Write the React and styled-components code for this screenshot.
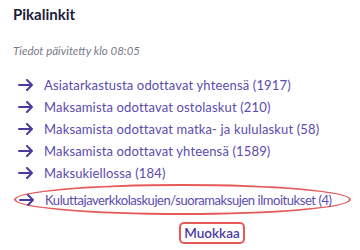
import { createGlobalStyle, styled } from "styled-components";

const GlobalStyle = createGlobalStyle`
  body {
    margin: 0;
    background: #fff;
    font-family: Lato, "Open Sans", sans-serif;
  }
`;

const links = [
  "Asiatarkastusta odottavat yhteensä (1917)",
  "Maksamista odottavat ostolaskut (210)",
  "Maksamista odottavat matka- ja kululaskut (58)",
  "Maksamista odottavat yhteensä (1589)",
  "Maksukiellossa (184)",
  "Kuluttajaverkkolaskujen/suoramaksujen ilmoitukset (4)",
];

function Arrow() {
  return (
    <ArrowIcon width="16" height="12" viewBox="0 0 16 12" fill="none">
      <path
        d="M1 6h13M9 1l5 5-5 5"
        stroke="#4b3aa0"
        strokeWidth="2"
        strokeLinecap="round"
        strokeLinejoin="round"
      />
    </ArrowIcon>
  );
}

export default function App() {
  return (
    <>
      <GlobalStyle />
      <Panel>
        <Title>Pikalinkit</Title>
        <Updated>Tiedot päivitetty klo 08:05</Updated>
        <LinkList>
          {links.map((text, i) => {
            const marked = i === links.length - 1;
            return (
              <LinkRow key={text} $marked={marked}>
                <Arrow />
                <LinkText $tight={marked}>{text}</LinkText>
              </LinkRow>
            );
          })}
        </LinkList>
        <Footer>
          <EditButton>Muokkaa</EditButton>
        </Footer>
      </Panel>
    </>
  );
}

const Panel = styled.div`
  width: 360px;
  height: 250px;
  box-sizing: border-box;
  padding: 5px 9px 0 13px;
`;

const Title = styled.div`
  font-size: 15px;
  font-weight: 700;
  color: #1c1c3c;
  line-height: 18px;
`;

const Updated = styled.div`
  margin-top: 21px;
  font-size: 11.5px;
  font-style: italic;
  color: #7a7a88;
  line-height: 14px;
`;

const LinkList = styled.ul`
  list-style: none;
  margin: 16px 0 0;
  padding: 0;
  display: flex;
  flex-direction: column;
`;

const LinkRow = styled.li`
  display: flex;
  align-items: center;
  gap: 10px;
  box-sizing: border-box;
  height: ${(p) => (p.$marked ? "31px" : "22px")};
  width: ${(p) => (p.$marked ? "337px" : "auto")};
  margin-left: ${(p) => (p.$marked ? "1px" : "0")};
  padding-left: ${(p) => (p.$marked ? "3px" : "5px")};
  border: ${(p) => (p.$marked ? "2px solid #e65a5a" : "none")};
  border-radius: 50%;
`;

const ArrowIcon = styled.svg`
  flex-shrink: 0;
`;

const LinkText = styled.span`
  font-size: 13px;
  letter-spacing: ${(p) => (p.$tight ? "-0.45px" : "0.15px")};
  color: #5b4bb0;
  white-space: nowrap;
`;

const Footer = styled.div`
  display: flex;
  justify-content: center;
  padding-left: 60px;
  margin-top: 7px;
`;

const EditButton = styled.button`
  font-family: inherit;
  font-size: 13.5px;
  font-weight: 600;
  color: #4b3aa0;
  background: none;
  border: 2px solid #e65a5a;
  border-radius: 5px;
  height: 22px;
  padding: 0 3px;
  cursor: pointer;
`;
